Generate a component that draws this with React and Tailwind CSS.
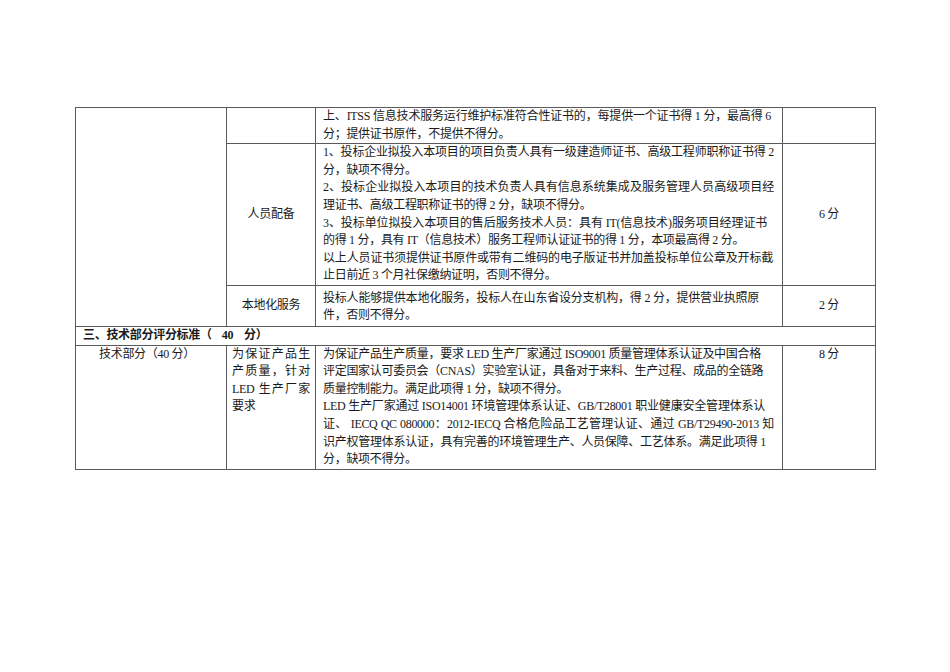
import clsx from 'clsx';

// one printed line of a cell; `j` stretches it to its width like Word's justify
function Line({ children, j, className }) {
  return (
    <div className={clsx('h-[17.6px] whitespace-nowrap leading-[17.6px]', j && 'text-justify [text-align-last:justify]', className)}>
      {children}
    </div>
  );
}

const cell = 'border border-[#5a5a5a] p-0';

export default function App() {
  return (
    <div className="min-h-[672px] w-[950px] bg-white pt-[107px] pl-[75px] font-['Liberation_Serif','Noto_Sans_CJK_SC',serif] text-[12px] leading-[17.6px] tracking-[-0.3px] text-[#1a1a1a]">
      <table className="w-[800px] table-fixed border-collapse">
        <colgroup>
          <col className="w-[151px]" />
          <col className="w-[89px]" />
          <col className="w-[467px]" />
          <col className="w-[93px]" />
        </colgroup>
        <tbody>
          <tr>
            <td rowSpan={3} className={cell} />
            <td className={cell} />
            <td className={clsx(cell, 'align-top pl-[7px]')}>
              <Line j className="w-[448px]">上、ITSS 信息技术服务运行维护标准符合性证书的，每提供一个证书得 1 分，最高得 6</Line>
              <Line>分；提供证书原件，不提供不得分。</Line>
            </td>
            <td className={cell} />
          </tr>
          <tr>
            <td className={clsx(cell, 'align-middle text-center')}>人员配备</td>
            <td className={clsx(cell, 'align-top pl-[7px]')}>
              <Line j className="w-[451px]">1、投标企业拟投入本项目的项目负责人具有一级建造师证书、高级工程师职称证书得 2</Line>
              <Line>分，缺项不得分。</Line>
              <Line j className="w-[451px]">2、投标企业拟投入本项目的技术负责人具有信息系统集成及服务管理人员高级项目经</Line>
              <Line>理证书、高级工程职称证书的得 2 分，缺项不得分。</Line>
              <Line j className="w-[444px]">3、投标单位拟投入本项目的售后服务技术人员：具有 IT(信息技术)服务项目经理证书</Line>
              <Line>的得 1 分，具有 IT（信息技术）服务工程师认证证书的得 1 分，本项最高得 2 分。</Line>
              <Line j className="w-[450px]">以上人员证书须提供证书原件或带有二维码的电子版证书并加盖投标单位公章及开标截</Line>
              <Line>止日前近 3 个月社保缴纳证明，否则不得分。</Line>
            </td>
            <td className={clsx(cell, 'align-middle text-center')}>6 分</td>
          </tr>
          <tr>
            <td className={clsx(cell, 'h-[41px] align-middle text-center')}>本地化服务</td>
            <td className={clsx(cell, 'align-middle pl-[7px] pt-[3px]')}>
              <Line j className="w-[436px]">投标人能够提供本地化服务，投标人在山东省设分支机构，得 2 分，提供营业执照原</Line>
              <Line>件，否则不得分。</Line>
            </td>
            <td className={clsx(cell, 'align-middle text-center')}>2 分</td>
          </tr>
          <tr>
            <td colSpan={4} className={clsx(cell, 'align-top pl-[7px] font-bold')}>
              <Line className="h-[16px] leading-[16px]">
                三、技术部分评分标准（<span className="ml-[10px]">40</span>
                <span className="ml-[11px]">分）</span>
              </Line>
            </td>
          </tr>
          <tr>
            <td className={clsx(cell, 'align-top pr-[8px] text-center')}>
              <Line>技术部分（40 分）</Line>
            </td>
            <td className={clsx(cell, 'align-top px-[5px]')}>
              <Line j>为保证产品生</Line>
              <Line j>产质量，针对</Line>
              <Line j>LED 生产厂家</Line>
              <Line>要求</Line>
            </td>
            <td className={clsx(cell, 'align-top pl-[7px]')}>
              <Line j className="w-[438px]">为保证产品生产质量，要求 LED 生产厂家通过 ISO9001 质量管理体系认证及中国合格</Line>
              <Line j className="w-[432px]">评定国家认可委员会（CNAS）实验室认证，具备对于来料、生产过程、成品的全链路</Line>
              <Line>质量控制能力。满足此项得 1 分，缺项不得分。</Line>
              <Line j className="w-[442px]">LED 生产厂家通过 ISO14001 环境管理体系认证、GB/T28001 职业健康安全管理体系认</Line>
              <Line j className="w-[451px]">证、 IECQ QC 080000：2012-IECQ 合格危险品工艺管理认证、通过 GB/T29490-2013 知</Line>
              <Line j className="w-[443px]">识产权管理体系认证，具有完善的环境管理生产、人员保障、工艺体系。满足此项得 1</Line>
              <Line>分，缺项不得分。</Line>
            </td>
            <td className={clsx(cell, 'align-top text-center')}>
              <Line>8 分</Line>
            </td>
          </tr>
        </tbody>
      </table>
    </div>
  );
}
